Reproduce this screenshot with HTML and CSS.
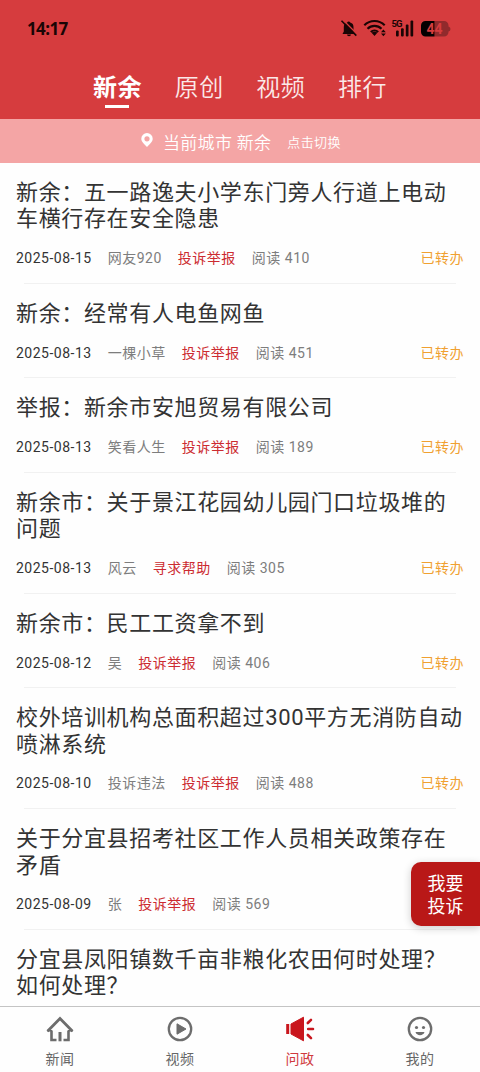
FILE: index.html
```html
<!DOCTYPE html>
<html lang="zh-CN">
<head>
  <meta charset="UTF-8" />
  <meta name="viewport" content="width=device-width, initial-scale=1.0" />
  <title>问政</title>
  <link rel="stylesheet" href="styles.css">
</head>
<body>
  <div class="app">
    <header class="header">
      <div class="status-bar">
        <span class="clock">14:17</span>
        <svg class="status-icons" width="112" height="22" viewBox="340 18 112 22">
          <!-- muted bell -->
          <path d="M342.500 34h13l-2-2.500v-4.500a4.600 4.600 0 0 0-3.300-4.500a1.600 1.600 0 0 0-3 0a4.600 4.600 0 0 0-3.400 4.500v4.500z" fill="#1a0505"/>
          <path d="M347 34.600h4a2 1.700 0 0 1-4 0z" fill="#1a0505"/>
          <path d="M343 20l15 15" stroke="#d63c3e" stroke-width="1.400"/>
          <path d="M341.500 20.800l14.800 14.800" stroke="#1a0505" stroke-width="1.600"/>
          <!-- wifi -->
          <g fill="none" stroke="#1a0505" stroke-width="2.100">
            <path d="M364.300 25.200a14.500 14.500 0 0 1 20.400 0"/>
            <path d="M367.500 28.700a10 10 0 0 1 14 0"/>
            <path d="M370.800 32a5.300 5.300 0 0 1 7.400 0"/>
          </g>
          <path d="M371.600 32.800a4.200 4.200 0 0 1 5.800 0l-2.900 3.200z" fill="#1a0505"/>
          <path d="M381 32.200l2.400-2.700 2.400 2.700zM381 33.600l2.400 2.700 2.400-2.700z" fill="#1a0505"/>
          <!-- signal -->
          <text class="net" x="391.500" y="27" textLength="11">5G</text>
          <g fill="#1a0505">
            <rect x="396" y="30.500" width="2.700" height="6" rx="1"/>
            <rect x="401" y="28.200" width="2.700" height="8.300" rx="1"/>
            <rect x="405.800" y="24.500" width="2.700" height="12" rx="1"/>
            <rect x="410.500" y="20.500" width="2.700" height="16" rx="1"/>
          </g>
          <!-- battery -->
          <path d="M434.500 21H444a4.500 4.500 0 0 1 4.500 4.500v1q2 .5 2 2.500t-2 2.500v.5a4.500 4.500 0 0 1-4.500 4.500h-9.500z" fill="#912a2c"/>
          <path d="M425.500 21h9v15.500h-9a4.500 4.500 0 0 1-4.500-4.500v-6.500a4.500 4.500 0 0 1 4.500-4.500z" fill="#050000"/>
          <text class="level" x="426.500" y="34">44</text>
        </svg>
      </div>
      <nav class="tabs">
        <a class="tab active">新余</a>
        <a class="tab">原创</a>
        <a class="tab">视频</a>
        <a class="tab">排行</a>
      </nav>
    </header>

    <div class="city-bar">
      <svg class="pin" width="12" height="14" viewBox="0 0 12 14">
        <path fill="#fff" fill-rule="evenodd" d="M6 0a5.700 5.700 0 0 1 5.700 5.700C11.700 9 8.500 11 6 14C3.500 11 .3 9 .3 5.700A5.700 5.700 0 0 1 6 0zM6 3.200a2.600 2.600 0 1 0 0 5.200a2.600 2.600 0 0 0 0-5.200z"/>
      </svg>
      <span class="city">当前城市 新余</span>
      <span class="switch">点击切换</span>
    </div>

    <main class="list">
      <article class="item">
        <h2>新余：五一路逸夫小学东门旁人行道上电动车横行存在安全隐患</h2>
        <div class="meta"><span class="date">2025-08-15</span><span>网友920</span><span class="type">投诉举报</span><span>阅读 410</span><span class="state">已转办</span></div>
      </article>
      <article class="item">
        <h2>新余：经常有人电鱼网鱼</h2>
        <div class="meta"><span class="date">2025-08-13</span><span>一棵小草</span><span class="type">投诉举报</span><span>阅读 451</span><span class="state">已转办</span></div>
      </article>
      <article class="item">
        <h2>举报：新余市安旭贸易有限公司</h2>
        <div class="meta"><span class="date">2025-08-13</span><span>笑看人生</span><span class="type">投诉举报</span><span>阅读 189</span><span class="state">已转办</span></div>
      </article>
      <article class="item">
        <h2>新余市：关于景江花园幼儿园门口垃圾堆的问题</h2>
        <div class="meta"><span class="date">2025-08-13</span><span>风云</span><span class="type">寻求帮助</span><span>阅读 305</span><span class="state">已转办</span></div>
      </article>
      <article class="item">
        <h2>新余市：民工工资拿不到</h2>
        <div class="meta"><span class="date">2025-08-12</span><span>吴</span><span class="type">投诉举报</span><span>阅读 406</span><span class="state">已转办</span></div>
      </article>
      <article class="item">
        <h2>校外培训机构总面积超过300平方无消防自动喷淋系统</h2>
        <div class="meta"><span class="date">2025-08-10</span><span>投诉违法</span><span class="type">投诉举报</span><span>阅读 488</span><span class="state">已转办</span></div>
      </article>
      <article class="item">
        <h2>关于分宜县招考社区工作人员相关政策存在矛盾</h2>
        <div class="meta"><span class="date">2025-08-09</span><span>张</span><span class="type">投诉举报</span><span>阅读 569</span></div>
      </article>
      <article class="item">
        <h2>分宜县凤阳镇数千亩非粮化农田何时处理？如何处理？</h2>
      </article>
    </main>

    <button class="complain">我要<br>投诉</button>

    <nav class="bottom-nav">
      <a class="nav-item">
        <svg width="30" height="28" viewBox="0 0 30 28" fill="none" stroke="#6d6d6d" stroke-width="2.600">
          <path d="M2.500 16.300L15 3.500l12.500 12.800" stroke-width="2.800"/>
          <path d="M2 15.800h5M23 15.800h5" stroke-width="1.600"/>
          <path d="M6.500 15.500V25h5M23.500 15.500V25h-5"/>
          <path d="M15 17v9.300" stroke-width="3"/>
        </svg>
        <span>新闻</span>
      </a>
      <a class="nav-item">
        <svg width="30" height="28" viewBox="0 0 30 28">
          <circle cx="15" cy="14" r="11.200" fill="none" stroke="#6d6d6d" stroke-width="2.300"/>
          <path d="M12 8.800l9 5.200-9 5.200z" fill="#6d6d6d" stroke="#6d6d6d" stroke-linejoin="round"/>
        </svg>
        <span>视频</span>
      </a>
      <a class="nav-item current">
        <svg width="30" height="28" viewBox="0 0 30 28" fill="#c9161d">
          <rect x="1.200" y="9" width="3" height="10"/>
          <path d="M6 9L18.500 2.200v23.600L6 19z" stroke="#c9161d" stroke-linejoin="round"/>
          <path d="M22.800 8l3.200-3.200M23.200 14h4.800M22.800 20l3.200 3.200" stroke="#c9161d" stroke-width="2.600" stroke-linecap="round"/>
        </svg>
        <span>问政</span>
      </a>
      <a class="nav-item">
        <svg width="30" height="28" viewBox="0 0 30 28">
          <circle cx="15" cy="14" r="11.200" fill="none" stroke="#6d6d6d" stroke-width="2.300"/>
          <circle cx="11.500" cy="12.500" r="1.600" fill="#6d6d6d"/>
          <circle cx="18.500" cy="12.500" r="1.600" fill="#6d6d6d"/>
          <path d="M10.500 17h9c-1 4.200-8 4.200-9 0z" fill="#6d6d6d"/>
        </svg>
        <span>我的</span>
      </a>
    </nav>
  </div>
</body>
</html>
```
FILE: styles.css
```css
* {
  box-sizing: border-box;
}
body {
  margin: 0;
  font-family: Roboto, "Noto Sans CJK SC", sans-serif;
  background: #fefefe;
  color: #333;
}
.app {
  position: relative;
  display: flex;
  flex-direction: column;
  width: 480px;
  height: 1072px;
  overflow: hidden;
}

/* Header */
.header {
  flex: none;
  height: 119px;
  background: #d63c3e;
}
.status-bar {
  display: flex;
  justify-content: space-between;
  align-items: center;
  height: 58px;
  padding: 0 28px 0 27px;
}
.clock {
  font-family: "Noto Sans", sans-serif;
  font-size: 17px;
  font-weight: 700;
  line-height: 22px;
  letter-spacing: -0.6px;
  color: #1a0505;
}
.net {
  font: 700 9.5px Roboto, sans-serif;
  fill: #1a0505;
}
.level {
  font: 700 14px Roboto, sans-serif;
  fill: #d63c3e;
}
.tabs {
  display: flex;
  justify-content: center;
  gap: 32.700px;
  padding-top: 12px;
}
.tab {
  display: flex;
  flex-direction: column;
  align-items: center;
  font-size: 24px;
  line-height: 36px;
  letter-spacing: 0.5px;
  font-weight: 350;
  color: #fbe9e9;
}
.tab.active {
  font-weight: 700;
  color: #fff;
}
.tab.active::after {
  content: "";
  width: 24px;
  height: 3px;
  margin-top: -1px;
  background: #fff;
}
.city-bar {
  flex: none;
  display: flex;
  align-items: center;
  height: 44px;
  padding-left: 141px;
  background: #f4a5a5;
  color: #fff;
}
.pin {
  margin-top: -2px;
}
.city {
  margin-left: 10px;
  font-size: 17px;
  font-weight: 350;
  letter-spacing: 0.3px;
}
.switch {
  margin-left: 16px;
  font-size: 13px;
  font-weight: 350;
  letter-spacing: 0.4px;
}

/* List */
.list {
  flex: 1;
  min-height: 0;
  overflow: hidden;
}
.item {
  position: relative;
  padding: 17px 16px 15.700px;
}
.item::after {
  content: "";
  display: block;
  position: absolute;
  left: 24px;
  right: 24px;
  bottom: 0;
  height: 1px;
  background: #f1f1f1;
}
.item h2 {
  margin: 0;
  font-size: 22px;
  font-weight: 400;
  line-height: 26.400px;
  letter-spacing: 0.650px;
}
.meta {
  display: flex;
  gap: 16px;
  margin-top: 15.400px;
  font-size: 14px;
  line-height: 20px;
  letter-spacing: 0.500px;
  color: #7d7d7d;
}
.meta .date {
  color: #333;
}
.meta .type {
  color: #cc2b30;
}
.meta .state {
  margin-left: auto;
  color: #f0a030;
}

.complain {
  position: absolute;
  right: 0;
  top: 862px;
  width: 69px;
  height: 64px;
  padding: 2px 0 0;
  border: none;
  border-radius: 10px 0 0 10px;
  background: #b91817;
  box-shadow: 0 2px 8px rgba(0, 0, 0, 0.2);
  color: #fff;
  font-family: inherit;
  font-size: 18px;
  line-height: 23px;
}

/* Bottom navigation */
.bottom-nav {
  flex: none;
  display: flex;
  height: 66px;
  border-top: 1px solid #c4c4c4;
  background: #fefefe;
}
.nav-item {
  flex: 1;
  display: flex;
  flex-direction: column;
  align-items: center;
  padding-top: 8px;
  color: #666;
}
.nav-item span {
  margin-top: 6px;
  font-size: 14px;
  line-height: 20px;
  letter-spacing: 0.400px;
}
.nav-item.current {
  color: #d03a3e;
}
```
